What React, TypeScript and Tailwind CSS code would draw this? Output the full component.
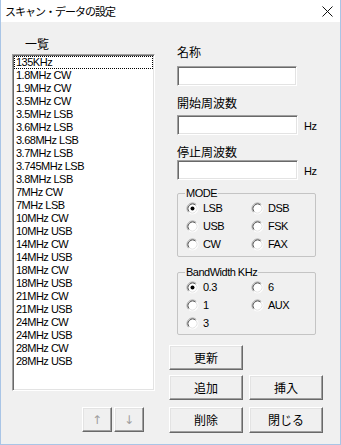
import React from "react";

const JP = "font-['Noto_Sans_CJK_JP',sans-serif]";
const LAT = "font-['Liberation_Sans','Noto_Sans_CJK_JP',sans-serif] tracking-[-0.5px]";

const items = [
  "135KHz",
  "1.8MHz CW",
  "1.9MHz CW",
  "3.5MHz CW",
  "3.5MHz LSB",
  "3.6MHz LSB",
  "3.68MHz LSB",
  "3.7MHz LSB",
  "3.745MHz LSB",
  "3.8MHz LSB",
  "7MHz CW",
  "7MHz LSB",
  "10MHz CW",
  "10MHz USB",
  "14MHz CW",
  "14MHz USB",
  "18MHz CW",
  "18MHz USB",
  "21MHz CW",
  "21MHz USB",
  "24MHz CW",
  "24MHz USB",
  "28MHz CW",
  "28MHz USB",
];

function Radio({ checked }: { checked?: boolean }) {
  return (
    <svg width="13" height="13" viewBox="0 0 13 13" className="shrink-0">
      <circle cx="6.5" cy="6.5" r="5.5" fill="#ffffff" />
      <path d="M2.61 10.39 A5.5 5.5 0 0 1 10.39 2.61" fill="none" stroke="#a0a0a0" strokeWidth="1" />
      <path d="M3.32 9.68 A4.5 4.5 0 0 1 9.68 3.32" fill="none" stroke="#505050" strokeWidth="1" />
      <path d="M10.39 2.61 A5.5 5.5 0 0 1 2.61 10.39" fill="none" stroke="#ffffff" strokeWidth="1" />
      <path d="M9.68 3.32 A4.5 4.5 0 0 1 3.32 9.68" fill="none" stroke="#e3e3e3" strokeWidth="1" />
      {checked && <circle cx="6.5" cy="6.5" r="2" fill="#000000" />}
    </svg>
  );
}

function RadioItem({ label, checked }: { label: string; checked?: boolean }) {
  return (
    <div className="flex h-[18px] items-center gap-[4px]">
      <Radio checked={checked} />
      <span className={`${LAT} text-[11px] leading-[18px] text-black`}>{label}</span>
    </div>
  );
}

function Btn({
  children,
  className,
}: {
  children: React.ReactNode;
  className?: string;
}) {
  return (
    <div
      className={`flex items-center justify-center bg-[#f0f0f0] border border-t-white border-l-white border-b-[#696969] border-r-[#696969] shadow-[inset_-1px_-1px_0_#a0a0a0,inset_1px_1px_0_#e3e3e3] ${className ?? ""}`}
    >
      {children}
    </div>
  );
}

function Sunken({ className, children }: { className?: string; children?: React.ReactNode }) {
  return (
    <div
      className={`bg-white border border-t-[#a0a0a0] border-l-[#a0a0a0] border-b-white border-r-white shadow-[inset_1px_1px_0_#696969,inset_-1px_-1px_0_#e3e3e3] ${className ?? ""}`}
    >
      {children}
    </div>
  );
}

function Group({
  label,
  children,
  className,
}: {
  label: string;
  children: React.ReactNode;
  className?: string;
}) {
  return (
    <div className={`relative w-[139px] border border-[#c4c4c4] rounded-[2px] ${className ?? ""}`}>
      <span
        className={`${LAT} absolute left-[7px] top-[-8px] bg-[#f0f0f0] px-[1px] text-[11px] leading-[14px] text-black`}
      >
        {label}
      </span>
      {children}
    </div>
  );
}

export default function App() {
  return (
    <div className="w-[341px] h-[445px] flex flex-col bg-[#f0f0f0] border-x border-b border-[#a9c5e6] overflow-hidden">
      {/* Title bar */}
      <div className="h-[22px] shrink-0 bg-white flex items-center justify-between pl-[4px] pr-[7px]">
        <span className={`${JP} text-[11px] leading-[14px] tracking-[-1px] text-black`}>
          スキャン・データの設定
        </span>
        <svg width="11" height="11" viewBox="0 0 11 11">
          <path d="M0.5 0.5 L10.5 10.5 M10.5 0.5 L0.5 10.5" stroke="#111" strokeWidth="1" />
        </svg>
      </div>

      {/* Body */}
      <div className="flex flex-1 pl-[11px]">
        {/* Left column */}
        <div className="flex flex-col w-[143px]">
          <div className="h-[32px] pt-[9px] pl-[13px]">
            <span className={`${JP} text-[12px] leading-[14px] text-black`}>一覧</span>
          </div>
          <Sunken className="h-[337px] w-[143px] pt-[1px] pl-[1px] pr-[1px] overflow-hidden">
            <div className="flex flex-col">
              {items.map((it, i) => (
                <div
                  key={it}
                  className={`h-[13px] pl-[2px] flex items-center ${
                    i === 0 ? "outline outline-1 outline-dotted outline-black -outline-offset-1" : ""
                  }`}
                >
                  <span className={`${LAT} text-[11px] leading-[13px] text-black`}>{it}</span>
                </div>
              ))}
            </div>
          </Sunken>
          <div className="flex mt-[16px] pl-[70px] gap-[2px]">
            <Btn className="w-[30px] h-[25px]">
              <span className="font-['DejaVu_Sans',sans-serif] text-[12px] leading-[14px] text-[#a0a0a0]">↑</span>
            </Btn>
            <Btn className="w-[30px] h-[25px]">
              <span className="font-['DejaVu_Sans',sans-serif] text-[12px] leading-[14px] text-[#a0a0a0]">↓</span>
            </Btn>
          </div>
        </div>

        {/* Right column */}
        <div className="flex flex-col ml-[14px] w-[156px]">
          <div className="pl-[8px] flex flex-col">
            <div className={`${JP} mt-[22px] h-[16px] text-[12px] leading-[16px] text-black`}>名称</div>
            <Sunken className="mt-[6px] h-[20px] w-[120px]" />
            <div className={`${JP} mt-[9px] h-[16px] text-[12px] leading-[16px] text-black`}>開始周波数</div>
            <div className="mt-[4px] flex items-end">
              <Sunken className="h-[20px] w-[121px]" />
              <span className={`${LAT} ml-[6px] mb-[2px] text-[11px] leading-[13px] text-black`}>Hz</span>
            </div>
            <div className={`${JP} mt-[9px] h-[16px] text-[12px] leading-[16px] text-black`}>停止周波数</div>
            <div className="mt-[0px] flex items-end">
              <Sunken className="h-[20px] w-[121px]" />
              <span className={`${LAT} ml-[6px] mb-[2px] text-[11px] leading-[13px] text-black`}>Hz</span>
            </div>

            <Group label="MODE" className="mt-[13px] h-[64px]">
              <div className="grid grid-cols-[65px_65px] pl-[8px] pt-[5px]">
                <RadioItem label="LSB" checked />
                <RadioItem label="DSB" />
                <RadioItem label="USB" />
                <RadioItem label="FSK" />
                <RadioItem label="CW" />
                <RadioItem label="FAX" />
              </div>
            </Group>

            <Group label="BandWidth KHz" className="mt-[15px] h-[63px]">
              <div className="grid grid-cols-[65px_65px] pl-[8px] pt-[5px]">
                <RadioItem label="0.3" checked />
                <RadioItem label="6" />
                <RadioItem label="1" />
                <RadioItem label="AUX" />
                <RadioItem label="3" />
              </div>
            </Group>
          </div>

          <Btn className="mt-[10px] w-[74px] h-[25px]">
            <span className={`${JP} text-[12px] leading-[14px] text-black`}>更新</span>
          </Btn>
          <div className="mt-[5px] flex gap-[6px]">
            <Btn className="w-[74px] h-[25px]">
              <span className={`${JP} text-[12px] leading-[14px] text-black`}>追加</span>
            </Btn>
            <Btn className="w-[74px] h-[25px]">
              <span className={`${JP} text-[12px] leading-[14px] text-black`}>挿入</span>
            </Btn>
          </div>
          <div className="mt-[7px] flex gap-[6px]">
            <Btn className="w-[74px] h-[26px]">
              <span className={`${JP} text-[12px] leading-[14px] text-black`}>削除</span>
            </Btn>
            <Btn className="w-[74px] h-[26px]">
              <span className={`${JP} text-[12px] leading-[14px] text-black`}>閉じる</span>
            </Btn>
          </div>
        </div>
      </div>
    </div>
  );
}
